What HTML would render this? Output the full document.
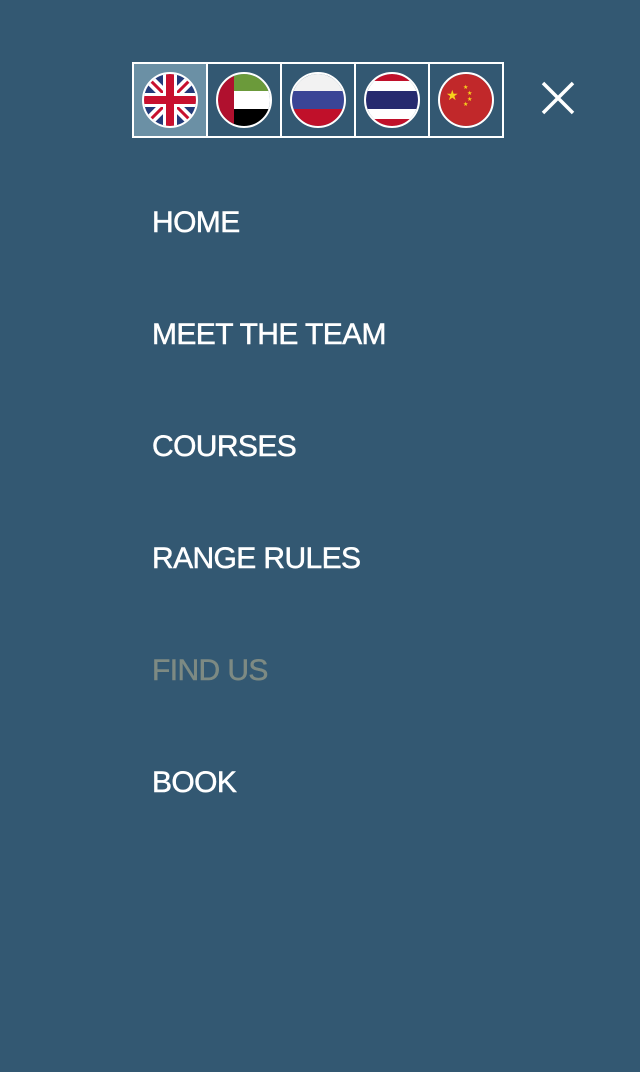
<!DOCTYPE html>
<html><head><meta charset="utf-8"><style>
html,body{margin:0;padding:0}
body{width:640px;height:1072px;background:#335872;position:relative;overflow:hidden;font-family:"Liberation Sans",sans-serif}
.cell{position:absolute;top:62px;width:72px;height:72px;border:2px solid #fff}
.cell svg{position:absolute;left:8px;top:8px}
.x{position:absolute;left:540px;top:80px}
.nav a{position:absolute;left:152px;color:#fff;font-size:30px;letter-spacing:-0.6px;text-decoration:none;line-height:1;-webkit-text-stroke:0.5px currentColor}
</style></head><body>
<div class="cell" style="left:132px;background:#6b90a5">
<svg width="56" height="56" viewBox="0 0 56 56"><defs><clipPath id="c1"><circle cx="28" cy="28" r="26"/></clipPath></defs><g clip-path="url(#c1)"><rect width="56" height="56" fill="#233a7a"/><path d="M0 0L56 56M56 0L0 56" stroke="#fff" stroke-width="10"/><path d="M0 0L56 56M56 0L0 56" stroke="#c8102e" stroke-width="3"/><path d="M28 0V56M0 28H56" stroke="#fff" stroke-width="14"/><path d="M28 0V56M0 28H56" stroke="#c8102e" stroke-width="8"/></g><circle cx="28" cy="28" r="27" fill="none" stroke="#fff" stroke-width="2"/></svg></div>
<div class="cell" style="left:206px">
<svg width="56" height="56" viewBox="0 0 56 56"><defs><clipPath id="c2"><circle cx="28" cy="28" r="26"/></clipPath></defs><g clip-path="url(#c2)"><rect width="56" height="19" fill="#6b9a3a"/><rect y="19" width="56" height="18" fill="#fff"/><rect y="37" width="56" height="19" fill="#000"/><rect width="18" height="56" fill="#b0102e"/></g><circle cx="28" cy="28" r="27" fill="none" stroke="#fff" stroke-width="2"/></svg></div>
<div class="cell" style="left:280px">
<svg width="56" height="56" viewBox="0 0 56 56"><defs><clipPath id="c3"><circle cx="28" cy="28" r="26"/></clipPath></defs><g clip-path="url(#c3)"><rect width="56" height="19" fill="#f2f2f2"/><rect y="19" width="56" height="18" fill="#3a4596"/><rect y="37" width="56" height="19" fill="#c0102a"/></g><circle cx="28" cy="28" r="27" fill="none" stroke="#fff" stroke-width="2"/></svg></div>
<div class="cell" style="left:354px">
<svg width="56" height="56" viewBox="0 0 56 56"><defs><clipPath id="c4"><circle cx="28" cy="28" r="26"/></clipPath></defs><g clip-path="url(#c4)"><rect width="56" height="56" fill="#fff"/><rect width="56" height="9" fill="#c0102a"/><rect y="47" width="56" height="9" fill="#c0102a"/><rect y="19" width="56" height="18" fill="#262a6e"/></g><circle cx="28" cy="28" r="27" fill="none" stroke="#fff" stroke-width="2"/></svg></div>
<div class="cell" style="left:428px">
<svg width="56" height="56" viewBox="0 0 56 56"><circle cx="28" cy="28" r="26" fill="#c1282a"/><text x="8" y="28" font-size="14" fill="#f7d21c">★</text><text x="25" y="17" font-size="6" fill="#f7d21c">★</text><text x="29" y="23" font-size="6" fill="#f7d21c">★</text><text x="29" y="29" font-size="6" fill="#f7d21c">★</text><text x="25" y="34" font-size="6" fill="#f7d21c">★</text><circle cx="28" cy="28" r="27" fill="none" stroke="#fff" stroke-width="2"/></svg></div>
<svg class="x" width="36" height="36" viewBox="0 0 36 36"><path d="M3 3L33 33M33 3L3 33" stroke="#fff" stroke-width="3.5"/></svg>
<div class="nav">
<a style="top:208px">HOME</a>
<a style="top:320px">MEET THE TEAM</a>
<a style="top:432px">COURSES</a>
<a style="top:544px">RANGE RULES</a>
<a style="top:656px;color:#7d8a83">FIND US</a>
<a style="top:768px">BOOK</a>
</div>
</body></html>
